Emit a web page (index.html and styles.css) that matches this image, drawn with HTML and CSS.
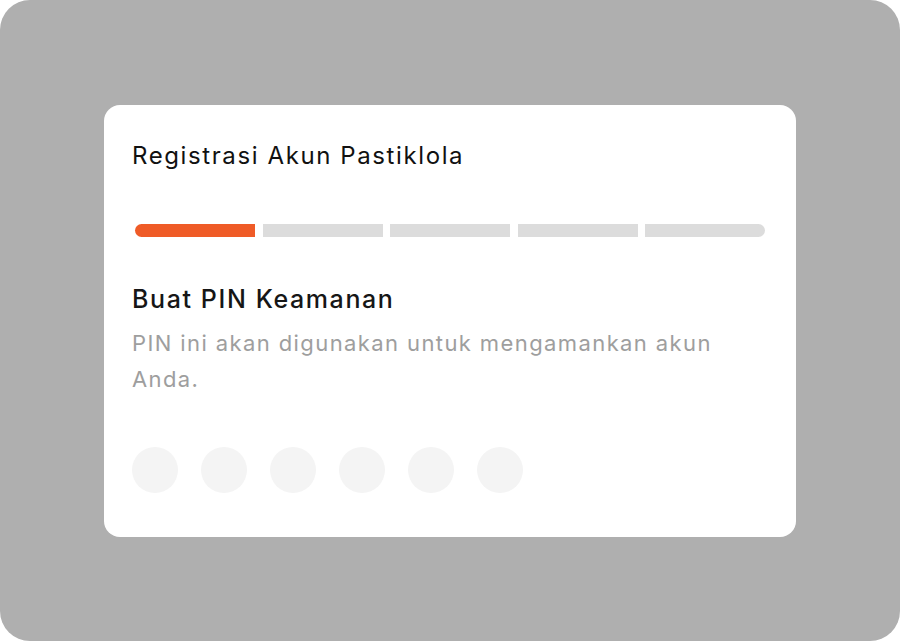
FILE: index.html
```html
<!DOCTYPE html>
<html lang="id">
<head>
<meta charset="utf-8">
<title>Registrasi Akun Pastiklola</title>
<link rel="stylesheet" href="styles.css">
</head>
<body>
<div class="frame">
  <div class="card">
    <h1 class="title">Registrasi Akun Pastiklola</h1>
    <div class="progress">
      <span class="seg active"></span>
      <span class="seg"></span>
      <span class="seg"></span>
      <span class="seg"></span>
      <span class="seg"></span>
    </div>
    <h2 class="heading">Buat PIN Keamanan</h2>
    <p class="desc">PIN ini akan digunakan untuk mengamankan akun Anda.</p>
    <div class="pins">
      <span class="pin"></span>
      <span class="pin"></span>
      <span class="pin"></span>
      <span class="pin"></span>
      <span class="pin"></span>
      <span class="pin"></span>
    </div>
  </div>
</div>
</body>
</html>
```
FILE: styles.css
```css
html, body {
  margin: 0;
  padding: 0;
  background: #ffffff;
}
body {
  width: 900px;
  height: 641px;
  font-family: Inter, "Noto Sans", "Liberation Sans", sans-serif;
}
.frame {
  width: 900px;
  height: 641px;
  background: #afafaf;
  border-radius: 30px;
  display: flex;
  align-items: center;
  justify-content: center;
}
.card {
  box-sizing: border-box;
  width: 692px;
  height: 432px;
  background: #ffffff;
  border-radius: 16px;
  padding: 35px 28px 44px 28px;
  display: flex;
  flex-direction: column;
}
.title {
  margin: 0;
  font-size: 24px;
  line-height: 32px;
  font-weight: 400;
  color: #111111;
  letter-spacing: 1.6px;
}
.progress {
  margin: 52px 3px 0 3px;
  height: 13px;
  display: flex;
  gap: 7.5px;
}
.seg {
  flex: 1;
  background: #dcdcdc;
}
.seg:first-child {
  border-radius: 6.5px 0 0 6.5px;
}
.seg:last-child {
  border-radius: 0 6.5px 6.5px 0;
}
.seg.active {
  background: #ef5b27;
}
.heading {
  margin: 45px 0 0 0;
  font-size: 25px;
  line-height: 34px;
  font-weight: 500;
  color: #161616;
  letter-spacing: 1.6px;
}
.desc {
  margin: 9px 0 0 0;
  font-size: 22px;
  line-height: 36px;
  color: #9e9e9e;
  letter-spacing: 1.4px;
}
.pins {
  margin-top: 50px;
  display: flex;
  gap: 23px;
}
.pin {
  width: 46px;
  height: 46px;
  border-radius: 50%;
  background: #f4f4f4;
}
```
